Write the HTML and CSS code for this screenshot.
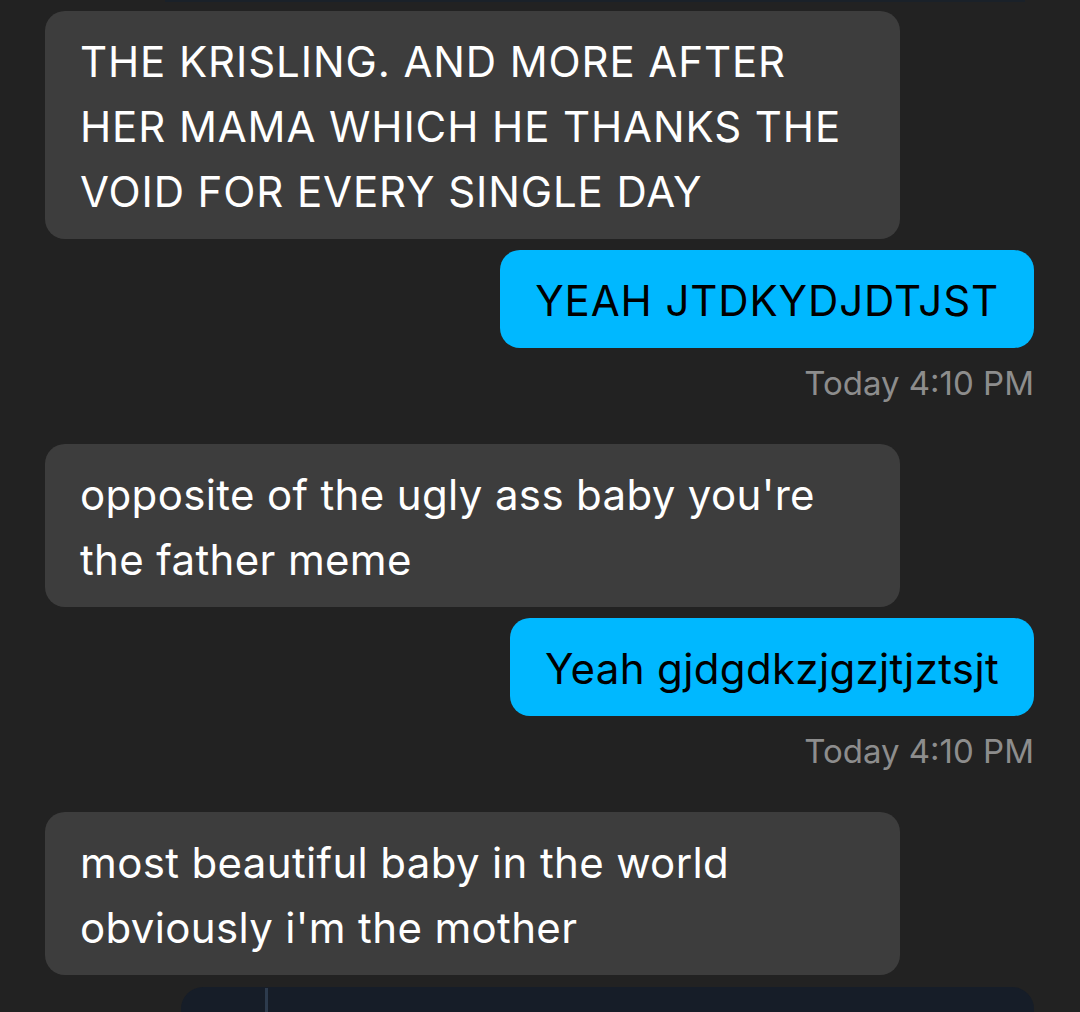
FILE: index.html
```html
<!DOCTYPE html>
<html lang="en">
<head>
    <meta charset="UTF-8">
    <meta name="viewport" content="width=device-width, initial-scale=1.0">
    <title>Messages</title>
    <link rel="stylesheet" href="styles.css">
</head>
<body>

<div class="thread">
    <!-- tail of the previous post card -->
    <div class="prev-card"></div>

    <div class="msg them caps">THE KRISLING. AND MORE AFTER HER MAMA WHICH HE THANKS THE VOID FOR EVERY SINGLE DAY</div>

    <div class="msg me caps">YEAH JTDKYDJDTJST</div>
    <div class="stamp">Today 4:10 PM</div>

    <div class="msg them">opposite of the ugly ass baby you're the father meme</div>

    <div class="msg me">Yeah gjdgdkzjgzjtjztsjt</div>
    <div class="stamp">Today 4:10 PM</div>

    <div class="msg them">most beautiful baby in the world obviously i'm the mother</div>

    <!-- shared post preview, cut off at the bottom -->
    <div class="post-preview">
        <div class="quote-bar"></div>
    </div>
</div>

</body>
</html>
```

FILE: styles.css
```css
body {
    font-family: Inter, "Noto Sans", sans-serif;
    background-color: #222222;
    margin: 0;
    padding: 0;
    overflow: hidden;
}
.thread {
    display: flex;
    flex-direction: column;
    padding: 0 46px 0 45px;
}
.prev-card {
    height: 2px;
    margin: 0 9px 9px 120px;
    background-color: #1a2129;
}
.msg {
    font-size: 42px;
    line-height: 65px;
    letter-spacing: 0.35px;
    padding: 18px 35px 15px;
    border-radius: 20px;
}
.caps {
    letter-spacing: 0.9px;
}
.them {
    width: 855px;
    box-sizing: border-box;
    background-color: #3d3d3d;
    color: #fff;
    align-self: flex-start;
}
.me {
    background-color: #00b8ff;
    color: #000;
    align-self: flex-end;
}
.them + .them, .them + .me {
    margin-top: 11px;
}
.stamp {
    align-self: flex-end;
    color: #8d8d8d;
    font-size: 33px;
    line-height: 50px;
    margin: 10px 0 36px 0;
}
.post-preview {
    margin: 12px 0 0 136px;
    height: 80px;
    background-color: #161d28;
    border-radius: 22px;
    position: relative;
}
.quote-bar {
    position: absolute;
    left: 84px;
    top: 1px;
    bottom: 0;
    width: 3px;
    background-color: #2d3b4d;
}
```
